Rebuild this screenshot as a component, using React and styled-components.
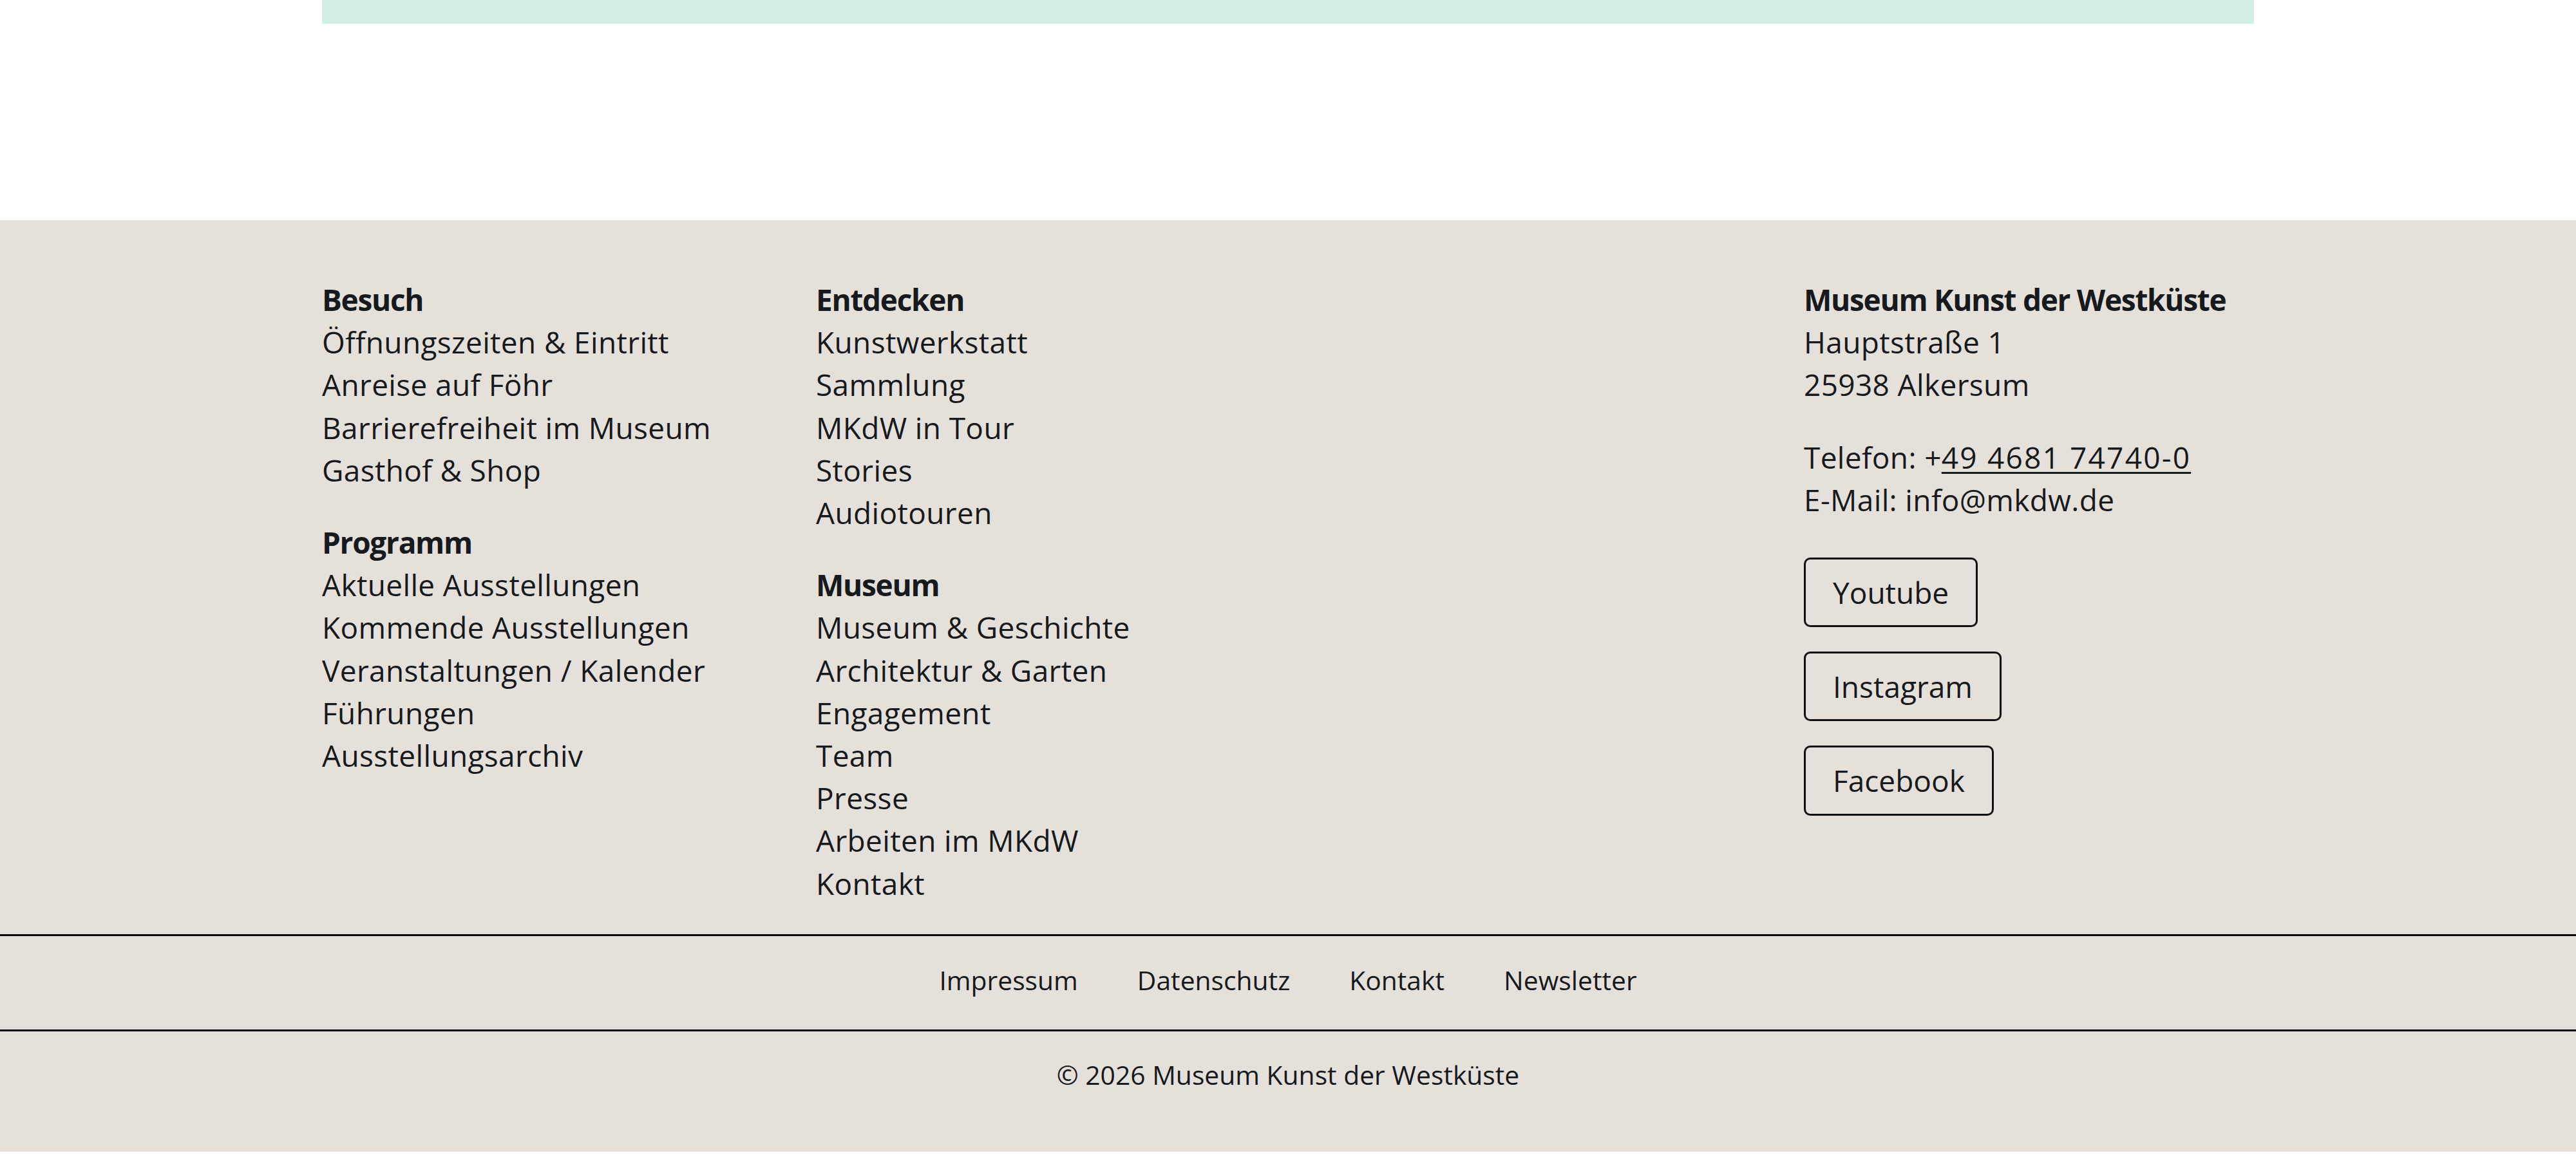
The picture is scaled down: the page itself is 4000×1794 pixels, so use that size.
import React from "react";
import styled, { createGlobalStyle } from "styled-components";

const GlobalStyle = createGlobalStyle`
  html, body {
    margin: 0;
    padding: 0;
    background: #ffffff;
  }
  body {
    font-family: "Open Sans", "Noto Sans", Arial, sans-serif;
    color: #16191d;
  }
  * {
    box-sizing: border-box;
  }
`;

const Teaser = styled.div`
  width: 3000px;
  height: 37px;
  margin: 0 auto;
  background: #d3ede7;
`;

const Footer = styled.footer`
  margin-top: 305px;
  background: #e5e1da;
  padding-top: 90px;
  font-size: 46px;
  line-height: 66.2px;
`;

const Columns = styled.div`
  width: 3000px;
  margin: 0 auto;
  display: grid;
  grid-template-columns: repeat(4, 1fr);
  column-gap: 68px;
  letter-spacing: 0.35px;
`;

const Column = styled.div`
  grid-column: ${(p) => p.$col};
`;

const Group = styled.nav`
  margin-bottom: 46px;
`;

const Title = styled.div`
  font-weight: 700;
  letter-spacing: -1.3px;
`;

const NavLink = styled.a`
  display: block;
  color: inherit;
  text-decoration: none;
  white-space: nowrap;
`;

const Address = styled.p`
  margin: 0 0 ${(p) => p.$gap || 46}px;
`;

const Phone = styled.a`
  color: inherit;
  text-decoration: underline;
  text-decoration-thickness: 3px;
  text-underline-offset: 5px;
  letter-spacing: 2.2px;
`;

const Socials = styled.div`
  display: flex;
  flex-direction: column;
  align-items: flex-start;
  gap: 38px;
  padding-bottom: 46px;
`;

const SocialButton = styled.a`
  display: inline-block;
  padding: 18px 42px;
  border: 3px solid #111;
  border-radius: 10px;
  color: inherit;
  text-decoration: none;
  letter-spacing: 0;
`;

const LegalNav = styled.nav`
  display: flex;
  justify-content: center;
  gap: 92px;
  padding: 39px 0 47px;
  border-top: 3px solid #0b0b0b;
  border-bottom: 3px solid #0b0b0b;
  font-size: 40.8px;
  line-height: 59px;
`;

const LegalLink = styled.a`
  color: inherit;
  text-decoration: none;
`;

const Copyright = styled.div`
  text-align: center;
  padding: 38px 0 90px;
  font-size: 40.8px;
  line-height: 59px;
`;

const visit = [
  {
    title: "Besuch",
    links: [
      "Öffnungszeiten & Eintritt",
      "Anreise auf Föhr",
      "Barrierefreiheit im Museum",
      "Gasthof & Shop",
    ],
  },
  {
    title: "Programm",
    links: [
      "Aktuelle Ausstellungen",
      "Kommende Ausstellungen",
      "Veranstaltungen / Kalender",
      "Führungen",
      "Ausstellungsarchiv",
    ],
  },
];

const discover = [
  {
    title: "Entdecken",
    links: ["Kunstwerkstatt", "Sammlung", "MKdW in Tour", "Stories", "Audiotouren"],
  },
  {
    title: "Museum",
    links: [
      "Museum & Geschichte",
      "Architektur & Garten",
      "Engagement",
      "Team",
      "Presse",
      "Arbeiten im MKdW",
      "Kontakt",
    ],
  },
];

const NavGroups = ({ groups }) =>
  groups.map((g) => (
    <Group key={g.title}>
      <Title>{g.title}</Title>
      {g.links.map((l) => (
        <NavLink href="#" key={l}>
          {l}
        </NavLink>
      ))}
    </Group>
  ));

const App = () => {
  return (
    <>
      <GlobalStyle />
      <Teaser />
      <Footer>
        <Columns>
          <Column $col={1}>
            <NavGroups groups={visit} />
          </Column>
          <Column $col={2}>
            <NavGroups groups={discover} />
          </Column>
          <Column $col={4}>
            <Address>
              <Title>Museum Kunst der Westküste</Title>
              Hauptstraße 1
              <br />
              25938 Alkersum
            </Address>
            <Address $gap={57}>
              Telefon: +<Phone href="#">49 4681 74740-0</Phone>
              <br />
              E-Mail: info@mkdw.de
            </Address>
            <Socials>
              <SocialButton href="#">Youtube</SocialButton>
              <SocialButton href="#">Instagram</SocialButton>
              <SocialButton href="#">Facebook</SocialButton>
            </Socials>
          </Column>
        </Columns>
        <LegalNav>
          <LegalLink href="#">Impressum</LegalLink>
          <LegalLink href="#">Datenschutz</LegalLink>
          <LegalLink href="#">Kontakt</LegalLink>
          <LegalLink href="#">Newsletter</LegalLink>
        </LegalNav>
        <Copyright>© 2026 Museum Kunst der Westküste</Copyright>
      </Footer>
    </>
  );
};

export default App;
